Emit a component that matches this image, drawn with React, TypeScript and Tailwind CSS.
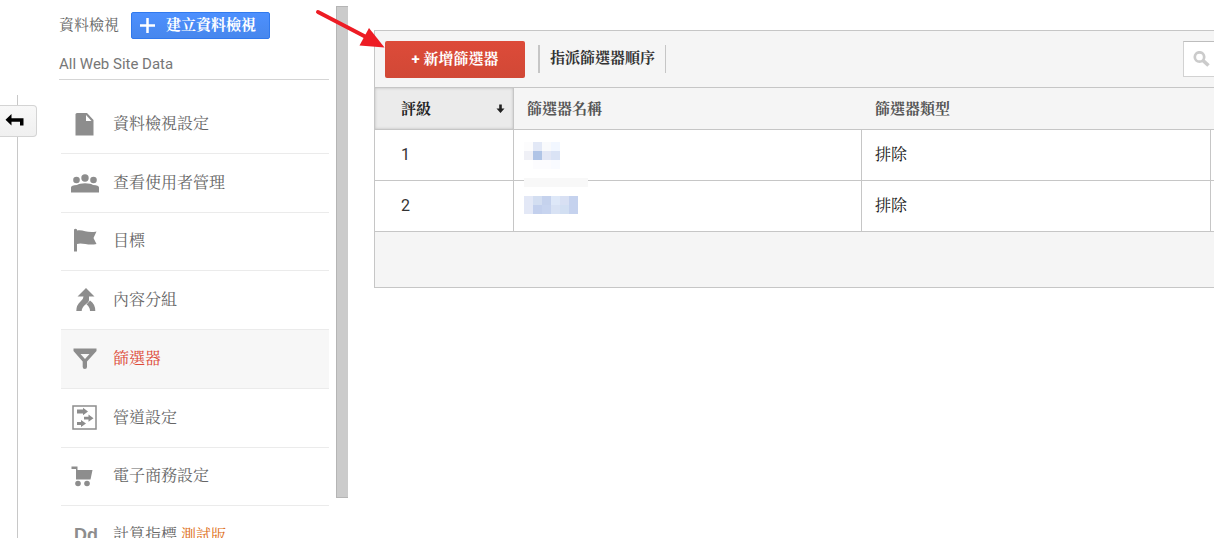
import type { ReactNode } from "react";

const FilePageIcon = () => (
  <svg width="30" height="26" viewBox="0 0 30 26" fill="#8d8d8d" aria-hidden="true">
    <path d="M7 2H17L23.500 9V24.500H5.500V3.500Q5.500 2 7 2Z" />
    <path d="M16 4V10H21.500Z" fill="#fff" />
  </svg>
);

const PeopleIcon = () => (
  <svg width="30" height="26" viewBox="0 0 30 26" fill="#8d8d8d" aria-hidden="true">
    <circle cx="6.500" cy="10" r="3.300" />
    <circle cx="15" cy="8" r="3.700" />
    <circle cx="23.500" cy="10" r="3.300" />
    <path d="M1 22.500V17.500Q1 15 7 15Q9.500 13.300 15 13.300Q21 13.300 23 15Q29 15 29 17.500V22.500Z" />
  </svg>
);

const FlagIcon = () => (
  <svg width="30" height="26" viewBox="0 0 30 26" fill="#8d8d8d" aria-hidden="true">
    <path d="M4 1.500Q5.500 0 7 1.500V2.500C13 1 17 5.500 26.500 3.500L23.500 10L26.500 16C18 18 12 14 7 16V23.500H4Z" />
  </svg>
);

const MergeIcon = () => (
  <svg width="30" height="26" viewBox="0 0 30 26" fill="#8d8d8d" aria-hidden="true">
    <path d="M16 1L24.500 9.500H19V13Q19 15 15.500 17.500Q11.700 20.500 11.700 24H6.300Q6.300 18 10.500 14.500Q13.500 12 13.500 9.500H7.500Z" />
    <path d="M20 13.500Q25.300 17 25.300 24H20Q20 20 16.500 17.500Z" />
  </svg>
);

const FunnelIcon = () => (
  <svg width="30" height="26" viewBox="0 0 30 26" aria-hidden="true">
    <path fill="#8d8d8d" fillRule="evenodd" d="M3.500 2.500H26.500V5L17 15.500V21Q17 23 14.800 23Q12.700 23 12.700 21V15.500L3.500 5ZM10.500 8L15 13L19.500 8Z" />
  </svg>
);

const ChannelIcon = () => (
  <svg width="30" height="26" viewBox="0 0 30 26" aria-hidden="true">
    <rect x="3" y="1" width="23" height="23" fill="#fff" stroke="#8d8d8d" strokeWidth="1.500" />
    <g fill="#8d8d8d">
      <path d="M7 4.500H13V2.800L18 6.500L13 10.200V8.500H7Z" />
      <path d="M14 11.800H18.500V9.500L23.500 13.200L18.500 16.800V14.500H14Z" />
      <path d="M7 17H11V15L16 18.500L11 22V20H7Z" />
    </g>
  </svg>
);

const CartIcon = () => (
  <svg width="30" height="26" viewBox="0 0 30 26" fill="#8d8d8d" aria-hidden="true">
    <path d="M1.500 3.500H7.500V7H22.500L20.500 16.500H6V6H1.500Z" />
    <circle cx="8" cy="20.500" r="2.800" />
    <circle cx="17" cy="20.500" r="2.800" />
  </svg>
);

const MetricIcon = () => (
  <span className="pl-1 font-['Liberation_Sans',sans-serif] text-[18px] font-bold text-[#8d8d8d]" aria-hidden="true">
    Dd
  </span>
);

interface NavItem {
  label: string;
  icon: ReactNode;
  active?: boolean;
  badge?: string;
}

const navItems: NavItem[] = [
  { label: "資料檢視設定", icon: <FilePageIcon /> },
  { label: "查看使用者管理", icon: <PeopleIcon /> },
  { label: "目標", icon: <FlagIcon /> },
  { label: "內容分組", icon: <MergeIcon /> },
  { label: "篩選器", icon: <FunnelIcon />, active: true },
  { label: "管道設定", icon: <ChannelIcon /> },
  { label: "電子商務設定", icon: <CartIcon /> },
  { label: "計算指標", icon: <MetricIcon />, badge: "測試版" },
];

const mosaic: [number, number, string][] = [
  [0, 0, "#fcfcfd"], [9, 0, "#e2e8f6"], [18, 0, "#f9fafc"], [27, 0, "#f2f7ff"],
  [0, 9, "#eff0f6"], [9, 9, "#b0c4e6"], [18, 9, "#e3e7f5"], [27, 9, "#dae3f5"],
  [9, 18, "#fcfcfe"], [18, 18, "#fcfcfe"], [27, 18, "#f9fbff"],
  [0, 54, "#e3e8f6"], [9, 54, "#d3def1"], [18, 54, "#c5d2ed"], [27, 54, "#dee8f8"], [36, 54, "#d8e0f3"], [45, 54, "#c5d2ee"],
  [0, 63, "#e3e8f6"], [9, 63, "#c3d0ed"], [18, 63, "#c7d4ef"], [27, 63, "#d8e2f4"], [36, 63, "#d2dff2"], [45, 63, "#c5d2ee"],
];

function CollapseRail() {
  return (
    <div className="flex w-[37px] shrink-0 flex-col pt-[95px]">
      <div className="ml-[17px] h-[10px] w-px bg-[#c8c8c8]" />
      <button
        type="button"
        aria-label="返回"
        className="flex h-8 w-full items-center rounded-r-sm border border-l-0 border-[#d4d4d4] bg-linear-to-b from-[#f8f8f8] to-[#f0f0f0] pl-[5px]"
      >
        <svg width="19" height="14" viewBox="0 0 19 14" aria-hidden="true">
          <path d="M0.500 5.800L6.500 0V4.300H18.500V11.500H15V7.700H6.500V11.500Z" fill="#000" />
        </svg>
      </button>
      <div className="ml-[17px] w-px flex-1 bg-[#c8c8c8]" />
    </div>
  );
}

function Sidebar() {
  return (
    <aside className="ml-[22px] w-[270px] shrink-0 pt-3">
      <div className="flex h-[27px] items-center gap-3 text-[15px]">
        <span className="text-[#666]">資料檢視</span>
        <button
          type="button"
          className="flex h-[27px] w-[139px] items-center gap-[10px] rounded-xs border border-[#3079ed] bg-linear-to-b from-[#4d90fe] to-[#4787ed] pl-[7px] font-bold text-white"
        >
          <svg width="17" height="17" viewBox="0 0 17 17" aria-hidden="true">
            <path d="M8.500 1V16M1 8.500H16" stroke="#fff" strokeWidth="2.500" />
          </svg>
          <span className="pb-px leading-6">建立資料檢視</span>
        </button>
      </div>
      <div className="flex h-[41px] items-center border-b border-[#d5d5d5] pt-[10px] text-[15px] text-[#777]">
        All Web Site Data
      </div>
      <nav className="mt-[15px] ml-[2px] grid h-[470px] grid-rows-8">
        {navItems.map((item) => (
          <a
            key={item.label}
            href="#"
            className={
              item.active
                ? "flex items-center border-b border-[#ebebeb] bg-[#f7f7f7] pl-[9px] text-base text-[#dd4b39]"
                : "flex items-center border-b border-[#ebebeb] pl-[9px] text-base text-[#666]"
            }
          >
            <span className="flex w-[43px] shrink-0">{item.icon}</span>
            {item.label}
            {item.badge && <span className="ml-1 text-[15px] text-[#dd6b10]">{item.badge}</span>}
          </a>
        ))}
      </nav>
    </aside>
  );
}

function FilterPanel() {
  return (
    <section className="mt-[30px] ml-[26px] min-w-0 flex-1 self-start border-y border-l border-[#c6c6c6] bg-[#f5f5f5] text-[15px] text-[#333]">
      <div className="flex h-[57px] items-center border-b border-[#c6c6c6] pl-[10px]">
        <button
          type="button"
          className="h-[37px] w-[140px] rounded-xs bg-linear-to-b from-[#dd4b39] to-[#d14836] font-bold text-white"
        >
          + 新增篩選器
        </button>
        <button type="button" className="ml-[13px] h-7 border-r border-l-2 border-[#c6c6c6] px-[10px] pb-[2px] font-bold">
          指派篩選器順序
        </button>
        <label className="ml-auto flex h-9 w-[31px] items-center overflow-hidden border-y border-l border-[#d2d2d2] border-t-[#bdbdbd] bg-white pl-[9px]">
          <svg width="17" height="17" viewBox="0 0 17 17" className="shrink-0" fill="none" stroke="#cbcbcb" aria-hidden="true">
            <circle cx="6.500" cy="6" r="4.700" strokeWidth="2.700" />
            <path d="M10 9.500L15.500 14.500" strokeWidth="3.700" />
          </svg>
          <input type="search" aria-label="搜尋" className="w-0 min-w-0 flex-1 outline-none" />
        </label>
      </div>
      <table className="w-full table-fixed border-separate border-spacing-0 text-left">
        <colgroup>
          <col className="w-[139px]" />
          <col className="w-[348px]" />
          <col />
          <col className="w-[3px]" />
        </colgroup>
        <thead>
          <tr className="h-[42px]">
            <th
              scope="col"
              aria-sort="descending"
              className="border-r border-b border-[#c6c6c6] bg-[#ebebeb] pt-[2px] pr-2 pl-[26px] font-bold text-[#222] inset-shadow-[0_0_3px_#bbb]"
            >
              <span className="flex items-center justify-between">
                評級
                <svg width="9" height="11" viewBox="0 0 9 11" aria-hidden="true">
                  <path d="M3.200 0.500H5.800V4.500H8.500L4.500 9L0.500 4.500H3.200Z" fill="#222" />
                </svg>
              </span>
            </th>
            <th scope="col" className="border-b border-[#c6c6c6] pt-[2px] pl-[13px] font-bold text-[#555]">篩選器名稱</th>
            <th scope="col" className="border-b border-[#c6c6c6] pt-[2px] pl-[13px] font-bold text-[#555]">篩選器類型</th>
            <th scope="col" className="border-b border-[#c6c6c6] p-0" />
          </tr>
        </thead>
        <tbody className="bg-white text-base text-[#333]">
          {[1, 2].map((rank) => (
            <tr key={rank} className="h-[51px]">
              <td className="border-r border-b border-[#c6c6c6] py-0 pl-[26px]">{rank}</td>
              <td className="relative border-r border-b border-[#c6c6c6] p-0">
                {rank === 1 && (
                  <svg className="absolute top-3 left-[10px] z-10" width="64" height="72" shapeRendering="crispEdges" aria-hidden="true">
                    <rect x="0" y="36" width="64" height="9" fill="#f8f8f8" />
                    {mosaic.map(([x, y, fill]) => (
                      <rect key={`${x}-${y}`} x={x} y={y} width="9" height="9" fill={fill} />
                    ))}
                  </svg>
                )}
              </td>
              <td className="border-r border-b border-[#c6c6c6] py-0 pl-[13px] text-[#222]">排除</td>
              <td className="border-b border-[#c6c6c6] p-0" />
            </tr>
          ))}
        </tbody>
      </table>
      <div className="h-[55px]" />
    </section>
  );
}

export default function App() {
  return (
    <div className="relative flex h-screen overflow-hidden bg-white font-[Roboto,'Noto_Serif_CJK_TC','Noto_Sans_CJK_TC',sans-serif]">
      <CollapseRail />
      <Sidebar />
      <div className="mt-[6px] mb-10 ml-[7px] w-3 shrink-0 border-t border-l border-[#b5b5b5] border-b border-b-[#b5b5b5] bg-[#cbcbcb]" />
      <FilterPanel />
      <svg className="pointer-events-none absolute top-[6px] left-[312px]" width="76" height="46" viewBox="0 0 76 46" aria-hidden="true">
        <path d="M6 6L54 31" stroke="#ed1c24" strokeWidth="4" strokeLinecap="round" />
        <path d="M72.500 41.500L57 22L47.500 39.500Z" fill="#ed1c24" />
      </svg>
    </div>
  );
}
